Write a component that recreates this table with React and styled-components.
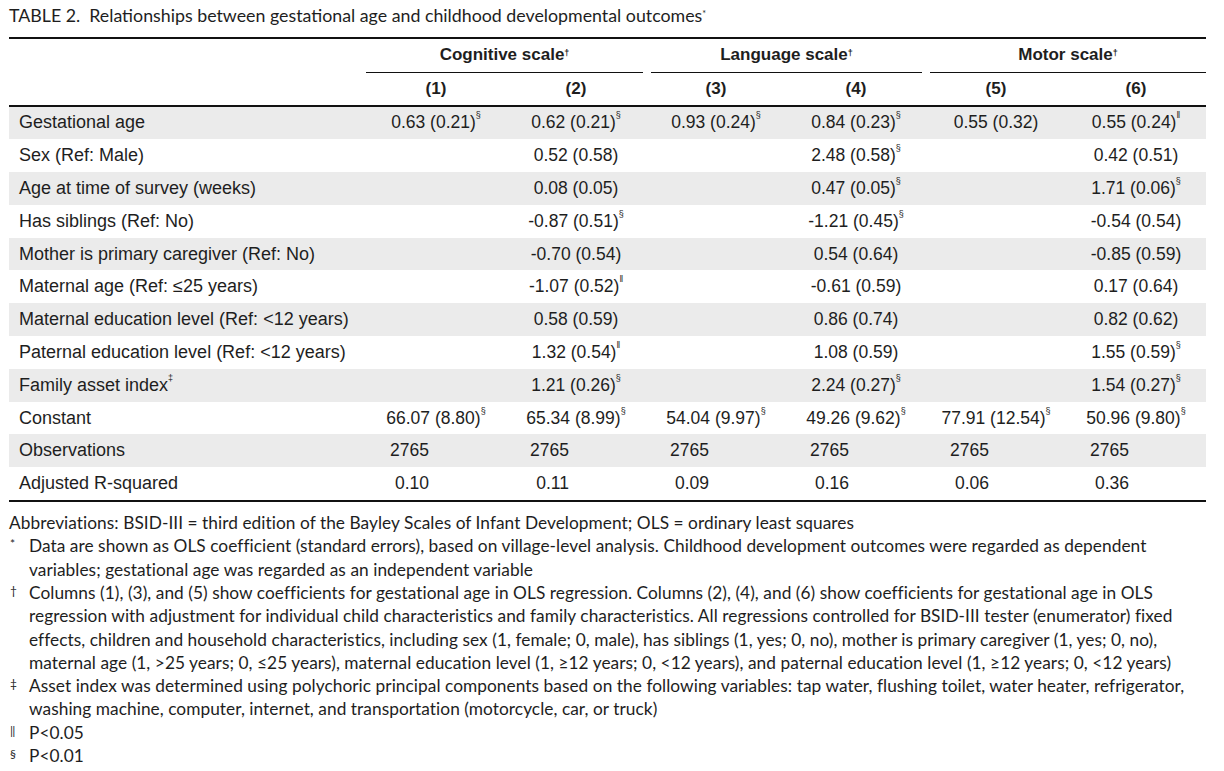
import React from 'react';
import styled, { createGlobalStyle } from 'styled-components';

const GlobalStyle = createGlobalStyle`
  body {
    margin: 0;
    background: #ffffff;
    color: #1e1e1e;
  }
`;

const Page = styled.div`
  width: 1197px;
  padding: 5px 0 0 9px;
`;

const Title = styled.div`
  font-family: Lato, "Open Sans", sans-serif;
  font-size: 17.8px;
  line-height: 21px;
  height: 32px;
  color: #1e1e1e;
`;

const Label = styled.span`
  margin-right: 9px;
`;

const Table = styled.div`
  border-top: 2px solid #111;
  border-bottom: 2px solid #111;
  font-family: "Liberation Sans", Arial, sans-serif;
  font-size: 17.5px;
  color: #1e1e1e;
`;

const Row = styled.div`
  display: grid;
  grid-template-columns: 357px repeat(6, 140px);
  height: ${p => p.$height || 32.8}px;
  align-items: center;
  background: ${p => (p.$shaded ? '#ebebeb' : 'transparent')};
  border-bottom: ${p => (p.$rule ? '2px solid #111' : 'none')};
  box-sizing: border-box;
`;

const GroupCell = styled.div`
  grid-column: span 2;
  height: 100%;
  display: flex;
  align-items: center;
  justify-content: center;
  font-size: 17px;
  font-weight: bold;
  border-bottom: 1.5px solid #111;
  margin: ${p => p.$margin};
  box-sizing: border-box;
`;

const HeadCell = styled.div`
  text-align: center;
  font-size: 17px;
  font-weight: bold;
`;

const RowLabel = styled.div`
  padding-left: 10px;
  font-size: 18px;
  white-space: nowrap;
`;

const Cell = styled.div`
  white-space: nowrap;
  text-align: ${p => (p.$right ? 'right' : 'center')};
  padding-right: ${p => (p.$right ? '77px' : '0')};
`;

const Mark = styled.sup`
  font-size: 9px;
  vertical-align: top;
  position: relative;
  top: -2px;
`;

const Notes = styled.div`
  padding-top: 9px;
  font-family: Lato, "Open Sans", sans-serif;
  font-size: 17.3px;
  letter-spacing: 0.05px;
  line-height: 23.3px;
  color: #1e1e1e;
`;

const Note = styled.div`
  display: grid;
  grid-template-columns: 20px 1fr;
`;

const NoteMark = styled.span`
  font-size: 12px;
  padding-left: 1px;
  line-height: 20px;
`;

const Line = styled.div`
  white-space: nowrap;
`;

const S = '§';
const P = '‖';

const rows = [
  ['Gestational age', ['0.63 (0.21)', S], ['0.62 (0.21)', S], ['0.93 (0.24)', S], ['0.84 (0.23)', S], ['0.55 (0.32)'], ['0.55 (0.24)', P]],
  ['Sex (Ref: Male)', null, ['0.52 (0.58)'], null, ['2.48 (0.58)', S], null, ['0.42 (0.51)']],
  ['Age at time of survey (weeks)', null, ['0.08 (0.05)'], null, ['0.47 (0.05)', S], null, ['1.71 (0.06)', S]],
  ['Has siblings (Ref: No)', null, ['-0.87 (0.51)', S], null, ['-1.21 (0.45)', S], null, ['-0.54 (0.54)']],
  ['Mother is primary caregiver (Ref: No)', null, ['-0.70 (0.54)'], null, ['0.54 (0.64)'], null, ['-0.85 (0.59)']],
  ['Maternal age (Ref: ≤25 years)', null, ['-1.07 (0.52)', P], null, ['-0.61 (0.59)'], null, ['0.17 (0.64)']],
  ['Maternal education level (Ref: <12 years)', null, ['0.58 (0.59)'], null, ['0.86 (0.74)'], null, ['0.82 (0.62)']],
  ['Paternal education level (Ref: <12 years)', null, ['1.32 (0.54)', P], null, ['1.08 (0.59)'], null, ['1.55 (0.59)', S]],
  [['Family asset index', '‡'], null, ['1.21 (0.26)', S], null, ['2.24 (0.27)', S], null, ['1.54 (0.27)', S]],
  ['Constant', ['66.07 (8.80)', S], ['65.34 (8.99)', S], ['54.04 (9.97)', S], ['49.26 (9.62)', S], ['77.91 (12.54)', S], ['50.96 (9.80)', S]],
];

const tailRows = [
  ['Observations', ['2765', '2765', '2765', '2765', '2765', '2765']],
  ['Adjusted R-squared', ['0.10', '0.11', '0.09', '0.16', '0.06', '0.36']],
];

const notes = [
  ['*', ['Data are shown as OLS coefficient (standard errors), based on village-level analysis. Childhood development outcomes were regarded as dependent', 'variables; gestational age was regarded as an independent variable']],
  ['†', [
    'Columns (1), (3), and (5) show coefficients for gestational age in OLS regression. Columns (2), (4), and (6) show coefficients for gestational age in OLS',
    'regression with adjustment for individual child characteristics and family characteristics. All regressions controlled for BSID-III tester (enumerator) fixed',
    'effects, children and household characteristics, including sex (1, female; 0, male), has siblings (1, yes; 0, no), mother is primary caregiver (1, yes; 0, no),',
    'maternal age (1, >25 years; 0, ≤25 years), maternal education level (1, ≥12 years; 0, <12 years), and paternal education level (1, ≥12 years; 0, <12 years)',
  ]],
  ['‡', ['Asset index was determined using polychoric principal components based on the following variables: tap water, flushing toilet, water heater, refrigerator,', 'washing machine, computer, internet, and transportation (motorcycle, car, or truck)']],
  [P, ['P<0.05']],
  [S, ['P<0.01']],
];

const Value = ({ v }) => (v ? <>{v[0]}{v[1] && <Mark>{v[1]}</Mark>}</> : null);

export default function App() {
  return (
    <Page>
      <GlobalStyle />
      <Title>
        <Label>TABLE 2.</Label>
        Relationships between gestational age and childhood developmental outcomes<Mark>*</Mark>
      </Title>
      <Table>
        <Row $height={33.5}>
          <div />
          <GroupCell $margin="0 3px 0 0">Cognitive scale<Mark>†</Mark></GroupCell>
          <GroupCell $margin="0 4px 0 5px">Language scale<Mark>†</Mark></GroupCell>
          <GroupCell $margin="0 0 0 4px">Motor scale<Mark>†</Mark></GroupCell>
        </Row>
        <Row $height={34} $rule>
          <div />
          {[1, 2, 3, 4, 5, 6].map(n => <HeadCell key={n}>({n})</HeadCell>)}
        </Row>
        {rows.map(([label, ...vals], i) => (
          <Row key={i} $shaded={i % 2 === 0}>
            <RowLabel>{Array.isArray(label) ? <>{label[0]}<Mark>{label[1]}</Mark></> : label}</RowLabel>
            {vals.map((v, j) => <Cell key={j}><Value v={v} /></Cell>)}
          </Row>
        ))}
        {tailRows.map(([label, vals], i) => (
          <Row key={label} $shaded={i === 0}>
            <RowLabel>{label}</RowLabel>
            {vals.map((v, j) => <Cell key={j} $right>{v}</Cell>)}
          </Row>
        ))}
      </Table>
      <Notes>
        <Line>Abbreviations: BSID-III = third edition of the Bayley Scales of Infant Development; OLS = ordinary least squares</Line>
        {notes.map(([mark, lines]) => (
          <Note key={mark}>
            <NoteMark>{mark}</NoteMark>
            <div>{lines.map(l => <Line key={l}>{l}</Line>)}</div>
          </Note>
        ))}
      </Notes>
    </Page>
  );
}
